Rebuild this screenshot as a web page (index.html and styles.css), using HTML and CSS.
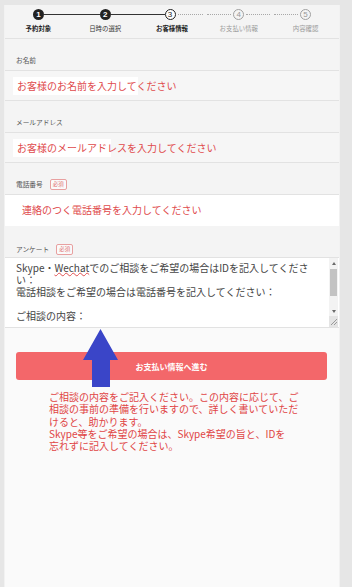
FILE: index.html
```html
<!DOCTYPE html>
<html lang="ja">
<head>
<meta charset="utf-8">
<title>お客様情報</title>
<link rel="stylesheet" href="styles.css">
</head>
<body>
<div class="card">
  <ol class="stepper">
    <li class="step done bold"><span class="track"><span class="num">1</span></span><span class="step-label">予約対象</span></li>
    <li class="step done"><span class="track"><span class="num">2</span></span><span class="step-label">日時の選択</span></li>
    <li class="step current"><span class="track"><span class="num">3</span></span><span class="step-label">お客様情報</span></li>
    <li class="step todo"><span class="track"><span class="num">4</span></span><span class="step-label">お支払い情報</span></li>
    <li class="step todo"><span class="track"><span class="num">5</span></span><span class="step-label">内容確認</span></li>
  </ol>

  <div class="label-row"><span class="label">お名前</span></div>
  <div class="input-row"><span class="ph hl-name">お客様のお名前を入力してください</span></div>

  <div class="label-row"><span class="label">メールアドレス</span></div>
  <div class="input-row"><span class="ph hl-mail">お客様のメールアドレスを入力してください</span></div>

  <div class="label-row"><span class="label">電話番号</span><span class="badge">必須</span></div>
  <div class="input-row white"><span class="ph phone">連絡のつく電話番号を入力してください</span></div>

  <div class="label-row survey"><span class="label">アンケート</span><span class="badge">必須</span></div>
  <div class="textarea">
    <div class="ta-text">Skype・<span class="spell">Wechat</span>でのご相談をご希望の場合はIDを記入してくださ<br>い：<br>電話相談をご希望の場合は電話番号を記入してください：<br><br>ご相談の内容：</div>
    <div class="scrollbar">
      <span class="sb-btn"><span class="tri-up"></span></span>
      <span class="sb-thumb"></span>
      <span class="sb-space"></span>
      <span class="sb-btn"><span class="tri-down"></span></span>
      <span class="sb-grip"><svg width="9" height="10" viewBox="0 0 9 10"><path d="M2 9 L8 3 M5 9 L8 6" stroke="#9a9a9a" stroke-width="1" fill="none"/></svg></span>
    </div>
  </div>

  <div class="actions">
    <button class="submit" type="button">お支払い情報へ進む</button>
    <p class="note">ご相談の内容をご記入ください。この内容に応じて、ご<br>相談の事前の準備を行いますので、詳しく書いていただ<br>けると、助かります。<br>Skype等をご希望の場合は、Skype希望の旨と、IDを<br>忘れずに記入してください。</p>
  </div>

  <svg class="arrow" width="37" height="59" viewBox="0 0 37 59"><polygon points="18.5,0 36,31 28,31 28,58 10,58 10,31 1,31" fill="#3a45c8"/></svg>
</div>
</body>
</html>
```
FILE: styles.css
```css
* { box-sizing: border-box; }
html, body { margin: 0; padding: 0; }
body {
  background: #e6e6e6;
  padding-top: 5px;
  font-family: "Noto Sans CJK JP", "Noto Sans", sans-serif;
  height: 587px;
  overflow: hidden;
}
.card {
  position: relative;
  margin-left: 4px;
  width: 336px;
  min-height: 582px;
  background: #fafafa;
  border-left: 1px solid #f2f2f2;
  border-right: 1px solid #f2f2f2;
}

/* stepper */
.stepper {
  list-style: none;
  margin: 0;
  padding: 4px 0 0;
  height: 34px;
  display: grid;
  grid-template-columns: repeat(5, 1fr);
  background: #f4f4f4;
  border-bottom: 1px solid #e2e2e2;
}
.step { display: flex; flex-direction: column; align-items: center; }
.track { display: flex; align-items: center; width: 100%; height: 11px; }
.track::before, .track::after { content: ""; flex: 1; height: 0; }
.num {
  width: 11px; height: 11px; border-radius: 50%;
  display: flex; align-items: center; justify-content: center;
  font-size: 8px; font-weight: 700; line-height: 1;
  font-family: "Liberation Sans", sans-serif;
}
.done .num { background: #222; color: #fff; }
.current .num { background: #fff; border: 1.5px solid #222; color: #222; font-weight: 400; }
.todo .num { background: #f4f4f4; border: 1px solid #a0a0a0; color: #999; font-weight: 400; }
.done .track::before, .done .track::after, .current .track::before { border-top: 1.5px solid #333; }
.current .track::after, .todo .track::before, .todo .track::after { border-top: 1px dotted #a8a8a8; margin: 0 2px; }
.step:first-child .track::before, .step:last-child .track::after { border-top-color: transparent; }
.step-label {
  margin-top: 4px;
  font-size: 6.4px;
  line-height: 9px;
  color: #333;
  white-space: nowrap;
}
.done.bold .step-label, .current .step-label { font-weight: 700; color: #222; }
.todo .step-label { color: #9a9a9a; }

/* fields */
.label-row {
  height: 32px;
  display: flex;
  align-items: flex-end;
  padding: 0 11px 4px;
  background: #f4f4f4;
  border-bottom: 1px solid #e2e2e2;
}
.label-row.survey { padding-bottom: 2px; }
.label { font-size: 6.7px; line-height: 11px; color: #555; }
.badge {
  margin-left: 7px;
  height: 11px;
  padding: 0 2px;
  border: 1px solid #e8a0a0;
  border-radius: 2px;
  color: #e07070;
  font-size: 5.5px;
  line-height: 9px;
  background: #fafafa;
}
.input-row {
  height: 30px;
  display: flex;
  align-items: center;
  padding: 0 0 0 12px;
  background: #f6f6f6;
  border-bottom: 1px solid #e2e2e2;
}
.input-row.white { background: #fff; border-bottom: none; height: 31px; padding: 0 0 1px 17px; }
.ph { font-size: 10px; line-height: 14px; color: #e04a4c; white-space: nowrap; }
.hl-name, .hl-mail { padding: 2px 4px; margin-left: -4px; }
.hl-name { background: linear-gradient(to right, #fff 125px, transparent 125px); }
.hl-mail { background: linear-gradient(to right, #fff 98px, transparent 98px); }

/* textarea */
.textarea {
  display: flex;
  height: 70px;
  background: #fff;
  border-bottom: 1px solid #e2e2e2;
}
.ta-text {
  flex: 1;
  padding: 4px 11px;
  font-size: 10px;
  line-height: 12px;
  color: #444;
  white-space: nowrap;
}
.spell { text-decoration: underline wavy #e05050; text-decoration-thickness: 0.6px; text-underline-offset: 0; }
.scrollbar {
  width: 9px;
  margin-right: 1px;
  display: flex;
  flex-direction: column;
  background: #f3f3f3;
}
.sb-btn { height: 10px; display: flex; align-items: center; justify-content: center; }
.tri-up { width: 0; height: 0; border-left: 2.5px solid transparent; border-right: 2.5px solid transparent; border-bottom: 3px solid #6a6a6a; }
.tri-down { width: 0; height: 0; border-left: 2.5px solid transparent; border-right: 2.5px solid transparent; border-top: 3px solid #6a6a6a; }
.sb-thumb { height: 27px; margin: 1px 1px 0; background: #c3c3c3; }
.sb-space { flex: 1; }
.sb-grip { height: 11px; background: #e4e4e4; display: flex; }

/* actions */
.actions { padding: 24px 12px 0 11px; }
.submit {
  display: block;
  width: 100%;
  height: 28px;
  border: none;
  border-radius: 3px;
  background: #f3676a;
  color: #fff;
  font-family: inherit;
  font-size: 8px;
  font-weight: 700;
  padding: 0;
}
.note {
  margin: 11px 0 0 33px;
  font-size: 10px;
  line-height: 12.3px;
  color: #e04444;
  white-space: nowrap;
}
.arrow { position: absolute; left: 77px; top: 324px; }
```
